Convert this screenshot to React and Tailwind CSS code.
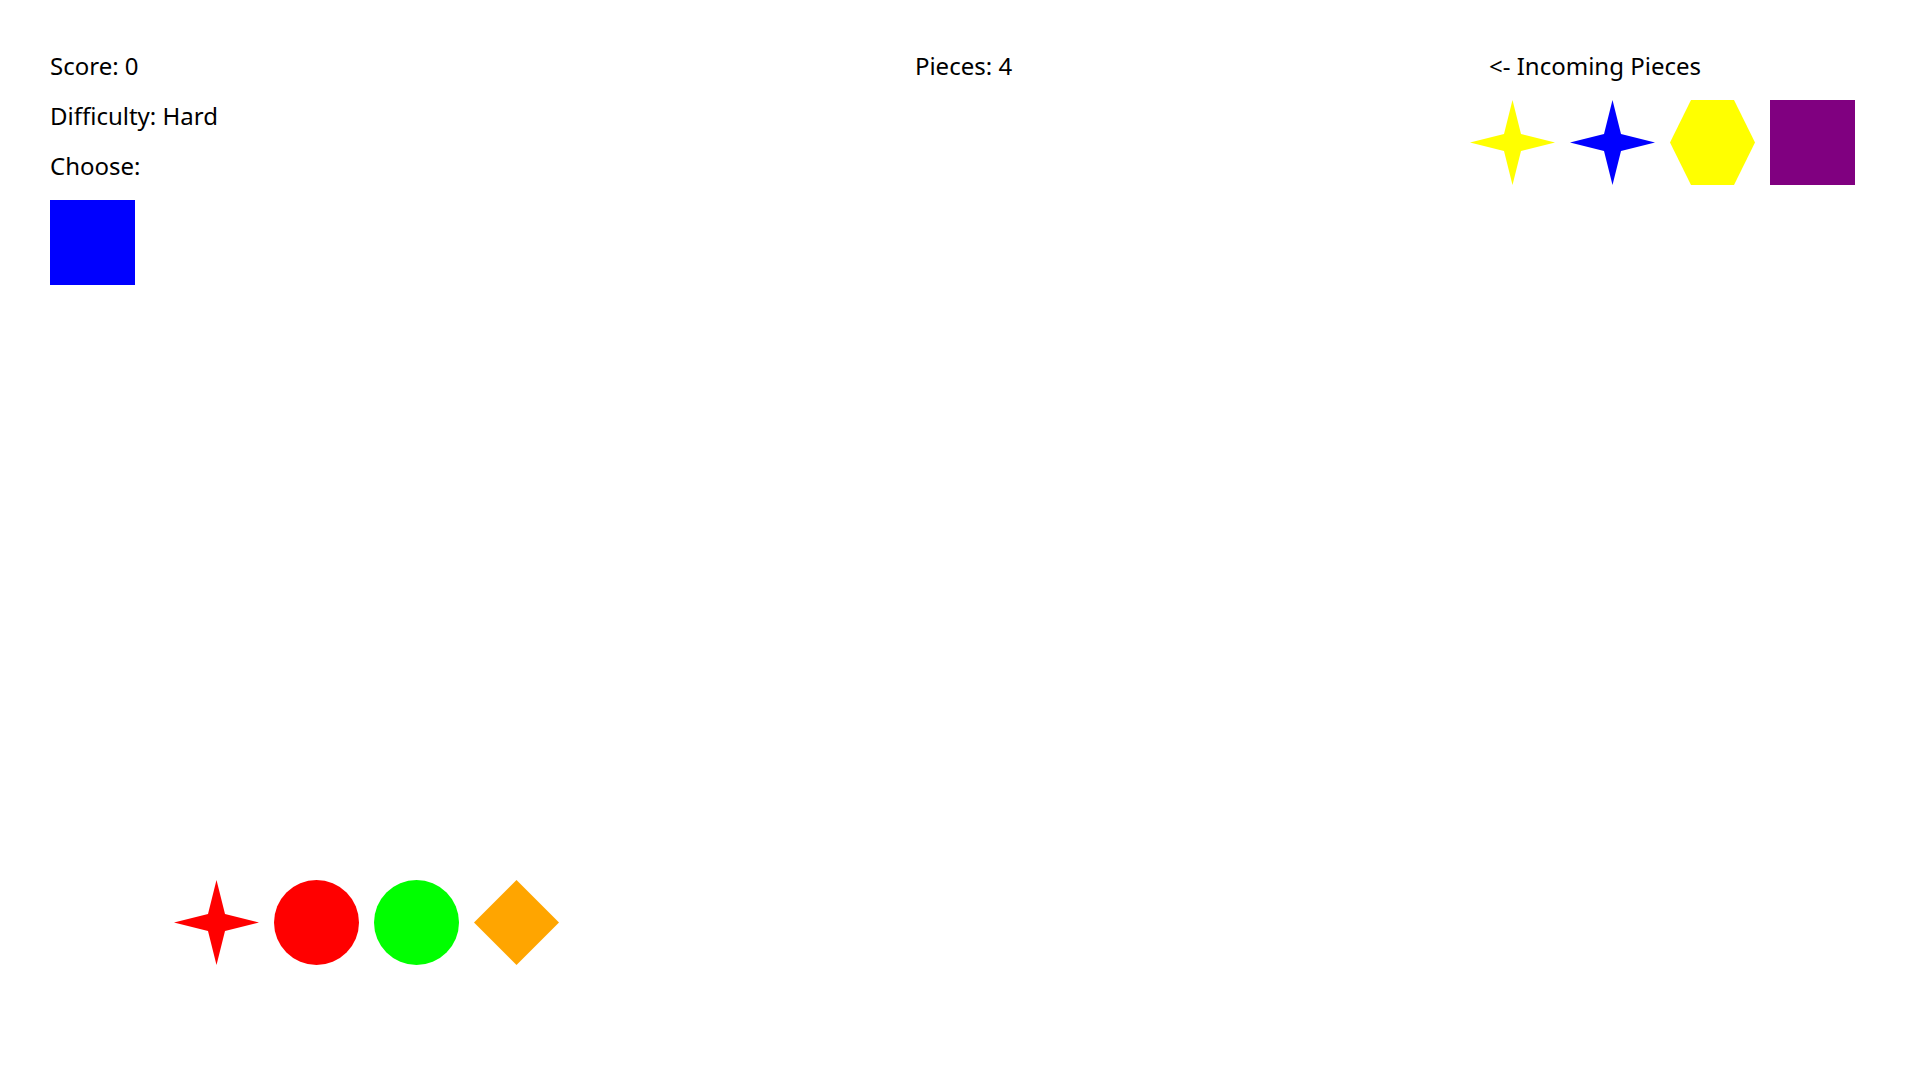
// shapes drawn as plain svg, layout by flex

const Star = ({ color }) => (
	<svg width="85" height="85" viewBox="0 0 85 85">
		<polygon
			points="42.5,0 51,34 85,42.5 51,51 42.5,85 34,51 0,42.5 34,34"
			fill={color}
		/>
	</svg>
);

const Hexagon = ({ color }) => (
	<svg width="85" height="85" viewBox="0 0 85 85">
		<polygon points="21,0 64,0 85,42.5 64,85 21,85 0,42.5" fill={color} />
	</svg>
);

const Diamond = ({ color }) => (
	<svg width="85" height="85" viewBox="0 0 85 85">
		<polygon points="42.5,0 85,42.5 42.5,85 0,42.5" fill={color} />
	</svg>
);

const Circle = ({ color }) => (
	<svg width="85" height="85" viewBox="0 0 85 85">
		<circle cx="42.5" cy="42.5" r="42.5" fill={color} />
	</svg>
);

const Square = ({ className }) => <div className={`w-[85px] h-[85px] ${className}`} />;

export default function App() {
	return (
		<div className="w-[1920px] h-[1080px] bg-white text-black flex flex-col font-['Noto_Sans',sans-serif] text-[24px] leading-[50px]">
			<div className="flex flex-row pt-[41px] px-[50px] pr-[65px]">
				<div className="flex-1 flex flex-col">
					<p>Score: 0</p>
					<p>Difficulty: Hard</p>
					<p>Choose:</p>
					<Square className="bg-[#0000ff] mt-[9px]" />
				</div>
				<div className="flex-1 flex flex-col items-center">
					<p className="ml-[22px]">Pieces: 4</p>
				</div>
				<div className="flex-1 flex flex-col items-end">
					<div className="flex flex-col">
						<p className="ml-[19px]">&lt;- Incoming Pieces</p>
						<div className="flex flex-row gap-[15px] mt-[9px]">
							<Star color="#ffff00" />
							<Star color="#0000ff" />
							<Hexagon color="#ffff00" />
							<Square className="bg-[#800080]" />
						</div>
					</div>
				</div>
			</div>
			<div className="mt-auto flex flex-row gap-[15px] pl-[174px] pb-[115px]">
				<Star color="#ff0000" />
				<Circle color="#ff0000" />
				<Circle color="#00ff00" />
				<Diamond color="#ffa500" />
			</div>
		</div>
	);
}
